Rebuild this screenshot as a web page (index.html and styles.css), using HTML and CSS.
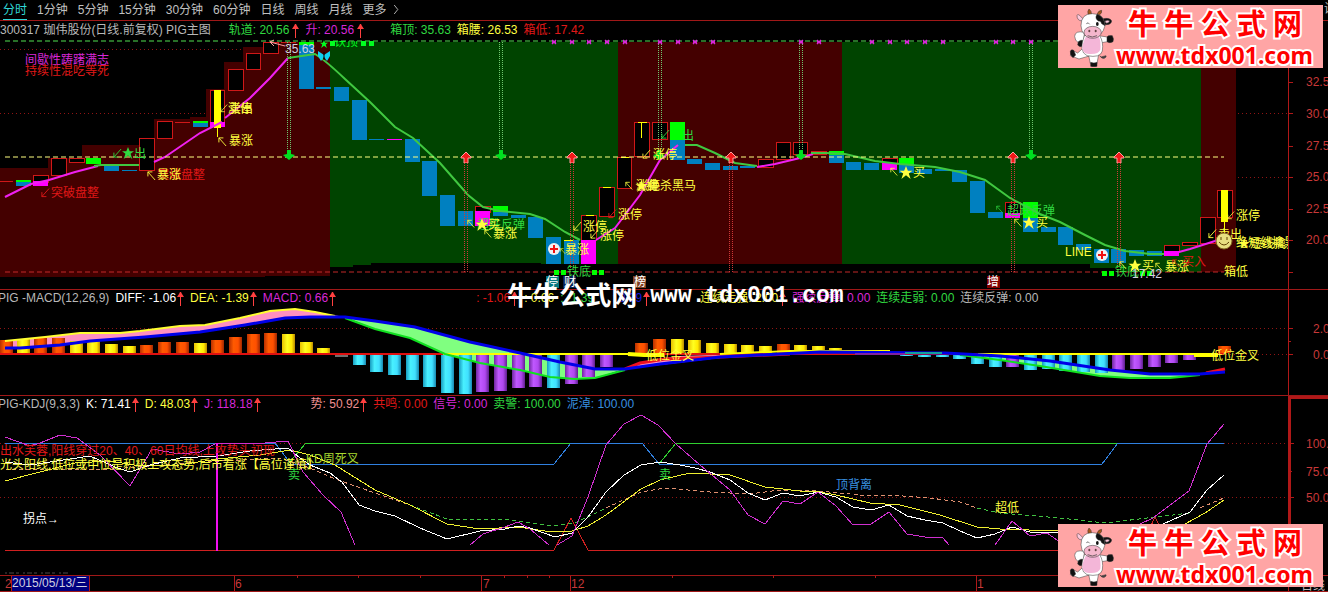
FILE: index.html
```
<!DOCTYPE html>
<html lang="zh-CN">
<head>
<meta charset="utf-8">
<title>珈伟股份 日线 PIG主图</title>
<link rel="stylesheet" href="styles.css">
</head>
<body>
<svg class="defs" aria-hidden="true">
  <defs>
    <linearGradient id="gOrange"><stop offset="0" stop-color="#b83000"/><stop offset=".35" stop-color="#ff5a00"/><stop offset=".7" stop-color="#ff5000"/><stop offset="1" stop-color="#a02800"/></linearGradient>
    <linearGradient id="gYellow"><stop offset="0" stop-color="#e8c000"/><stop offset=".4" stop-color="#ffff20"/><stop offset=".75" stop-color="#ffe800"/><stop offset="1" stop-color="#b88800"/></linearGradient>
    <linearGradient id="gCyan"><stop offset="0" stop-color="#189cc0"/><stop offset=".35" stop-color="#48f0ff"/><stop offset=".7" stop-color="#40e0ff"/><stop offset="1" stop-color="#1888b0"/></linearGradient>
    <linearGradient id="gPurple"><stop offset="0" stop-color="#7028a0"/><stop offset=".35" stop-color="#c058ff"/><stop offset=".7" stop-color="#b048f0"/><stop offset="1" stop-color="#602090"/></linearGradient>
    <symbol id="up" viewBox="0 0 7 14"><path d="M3 3h1v11H3zM3 0h1l1 2 2 3H0l2-3z" fill="#ff4040"/></symbol>
    <symbol id="sw" viewBox="0 0 10 10"><path d="M9 0L1 9M1 4v5h5" fill="none" stroke="currentColor"/></symbol>
    <symbol id="nw" viewBox="0 0 10 10"><path d="M9 10L1 1M1 6V1h5" fill="none" stroke="currentColor"/></symbol>
    <symbol id="star" viewBox="0 0 14 14"><path d="M7 0l2 5h5l-4 3 2 6-5-4-5 4 2-6-4-3h5z" fill="currentColor"/></symbol>
    <symbol id="buy" viewBox="0 0 12 12"><path d="M6 1l5 5v1H8v5H4V7H1V6z" fill="#f01818" stroke="#ffa0a0"/></symbol>
    <symbol id="sell" viewBox="0 0 12 10"><path d="M4 0h4v4l4 1-6 5-6-5 4-1z" fill="#00e020"/></symbol>
    <symbol id="x" viewBox="0 0 6 6"><path d="M1 1l4 4M5 1L1 5M1 3h4" stroke="#d828d8" stroke-width="1.4" fill="none"/></symbol>
    <symbol id="cross" viewBox="0 0 12 12"><circle cx="6" cy="6" r="6" fill="#f0f0f0"/><path d="M5 2h2v3h3v2H7v3H5V7H2V5h3z" fill="#f01010"/></symbol>
    <symbol id="cow" viewBox="0 0 135 180">
      <g stroke="#333" stroke-width="1.5" stroke-linejoin="round">
        <path d="M92 146q6 10 14 8q8-4 5-8l-12 3" fill="#444"/>
        <path d="M48 118L26 138 10 130 4 146 30 156Q50 150 64 146z" fill="#fff"/>
        <path d="M4 132q4-6 10-2l6 14-8 8q-10-8-8-20z" fill="#111"/>
        <path d="M58 140l6 30h20l6-34z" fill="#fff"/>
        <path d="M65 166q10 4 19 0v12q-10 3-19 0z" fill="#111"/>
        <path d="M46 76Q18 70 17 88q0 12 12 20l16-10z" fill="#fff"/>
        <path d="M28 104q8-8 16-2l-4 16q-8 4-14-4z" fill="#111"/>
        <path d="M88 86l28 4v14l-24 4z" fill="#fff"/>
        <path d="M114 90q2-5 16-4q5 8 2 18-10 6-18 0z" fill="#111"/>
        <path d="M46 86Q28 134 54 146q40 8 46-14Q104 104 92 86z" fill="#fff"/>
        <path d="M50 90Q28 134 54 140q34 4 40-12Q96 102 90 90z" fill="#f4b6d8" stroke="none"/>
        <path d="M58 24Q54 12 60 6q8 6 8 16zM90 24q10-4 8-14-10 0-14 12z" fill="#a85818"/>
        <path d="M42 36Q26 16 24 26q0 14 14 16z" fill="#ffc8dc"/>
        <path d="M100 36q22-6 28 6-2 14-24 10z" fill="#111"/>
        <path d="M108 42q8-4 14 0-2 8-12 6z" fill="#ffc8dc"/>
        <path d="M36 56q0-36 34-36 36 0 38 36-8 34-38 34-32 0-34-34z" fill="#fff"/>
        <path d="M84 22q22 6 24 34l-10-6q-2-10-10-8-12-8-4-20z" fill="#111"/>
        <ellipse cx="71" cy="76" rx="26" ry="18" fill="#f4b6cc"/>
      </g>
      <path d="M56 86q14 8 28 0M52 50q6-6 10 2" fill="none" stroke="#333" stroke-width="2"/>
      <ellipse cx="61" cy="72" rx="3" ry="4" fill="#644"/><ellipse cx="80" cy="72" rx="3" ry="4" fill="#644"/>
      <ellipse cx="85" cy="51" rx="4" ry="6" fill="#111"/>
    </symbol>
  </defs>
</svg>

<main class="terminal">
  <nav class="periods">
    <button class="period active">分时</button><button class="period">1分钟</button><button class="period">5分钟</button><button class="period">15分钟</button><button class="period">30分钟</button><button class="period">60分钟</button><button class="period">日线</button><button class="period">周线</button><button class="period">月线</button><button class="period">更多 <svg class="chev" viewBox="0 0 6 10"><path d="M1 0l4 5-4 5" fill="none" stroke="currentColor"/></svg></button>
    <span class="tools">设</span>
  </nav>

  <section class="panel">
    <header class="legend">
      <span class="grey">300317 珈伟股份(日线.前复权) PIG主图</span>
      <span class="green far">轨道: 20.56<svg class="arrow"><use href="#up"/></svg></span>
      <span class="magenta">升: 20.56<svg class="arrow"><use href="#up"/></svg></span>
      <span class="green wide">箱顶: 35.63</span>
      <span class="yellow">箱腰: 26.53</span>
      <span class="red">箱低: 17.42</span>
    </header>
    <svg class="chart" viewBox="0 21 1328 268">
      <g class="dots"><path d="M0 49H262M0 113H240M1238 113H1294M1238 177H1294"/></g>
      <path class="zone-red" d="M0 168H48V158H82V145H139V138H154V119H190V117H206V89H224V62H243V47H263V42H330V276H265V277H0zM618 42H842V264H618zM1201 42H1236V272H1201z"/>
      <path class="zone-green" d="M330 42H618V264H541V263H371V265H353V267H330zM842 42H1201V272H1120V268H1090V264H842z"/>
      <path d="M5 41H1224" stroke="#50e050" stroke-dasharray="5 3"/>
      <path d="M5 272H1224" stroke="#c02828" stroke-dasharray="5 3"/>

      <path class="hollow" d="M0 181h13M33 175h15v7h-15zM51 158h15v17h-15zM69 158h15v4h-15zM139 138h15v32h-15zM157 121h15v17h-15zM175 122h15M210 90h14v35h-14zM228 69h15v21h-15zM246 53h14v16h-14zM263 42h15v11h-15zM281 42h15M475 206h15v6h-15zM581 215h15v25h-15zM599 187h15v29h-15zM617 157h14v31h-14zM634 122h15v34h-15zM652 122h15v17h-15zM758 159h15v8h-15zM776 142h14v17h-14zM793 142h14v12h-14zM811 151h15v3h-15zM882 158h15v6h-15zM1005 202h15v11h-15zM1164 245h15v7h-15zM1182 242h15v3h-15zM1200 217h15v26h-15zM1217 190h15v27h-15z"/>
      <path class="blue-fill" d="M16 182h15v4h-15zM104 164h15v7h-15zM122 170h15v1h-15zM193 123h15v4h-15zM299 43h15v46h-15zM316 87h15v2h-15zM334 87h15v14h-15zM352 100h15v40h-15zM369 139h15v1h-15zM405 139h15v23h-15zM422 161h15v35h-15zM440 195h15v31h-15zM458 211h15v15h-15zM493 212h15v4h-15zM511 215h15v3h-15zM528 217h15v21h-15zM546 237h15v27h-15zM564 240h15v24h-15zM670 140h15v20h-15zM687 159h15v5h-15zM705 163h15v7h-15zM723 166h15v4h-15zM740 166h15v2h-15zM829 155h15v8h-15zM846 162h15v8h-15zM864 163h15v7h-15zM899 164h15v9h-15zM917 169h15v5h-15zM935 169h15v2h-15zM952 170h15v12h-15zM970 181h15v32h-15zM988 212h15v6h-15zM1023 218h15v14h-15zM1041 227h15v5h-15zM1058 227h15v18h-15zM1076 244h15v6h-15zM1094 249h15v14h-15zM1111 249h15v14h-15zM1129 250h15v6h-15zM1147 251h15v5h-15z"/>
      <path class="lime-fill" d="M16 180h15v2h-15zM86 158h15v6h-15zM193 121h15v2h-15zM299 42h15v3h-15zM493 206h15v6h-15zM670 122h15v18h-15zM829 151h15v4h-15zM899 158h15v6h-15zM1023 202h15v16h-15z"/>
      <path class="magenta-fill" d="M33 181h15v5h-15zM210 122h15v5h-15zM387 139h15v1h-15zM475 211h15v15h-15zM581 240h15v24h-15zM882 163h15v7h-15zM1005 213h15v5h-15zM1164 251h15v5h-15z"/>
      <path class="yellow-fill" d="M214 90h7v38h-7zM217 128h1v9h-1zM1221 190h7v32h-7zM1224 222h1v18h-1zM564 240h9v1h-9zM586 215h8v1h-8zM603 187h8v1h-8zM621 157h8v1h-8zM638 122h9v1h-9zM641 122h1v16h-1z"/>
      <g class="ma">
        <path class="m-up" d="M5 197L31 184 49 180 75 172 98 166M154 162L165 157 200 133 222 122M225 118L250 98 270 78 288 58M596 240L615 228 640 195 660 160 678 145M757 167L775 164 800 158 813 154M1179 252L1190 249 1215 241 1228 235"/>
        <path class="m-down" d="M94 166L101 165H139M288 58L315 54Q325 60 345 79L370 102 395 127 413 138 440 163 468 195 483 207 500 211 530 214 545 219 565 232 580 240M685 145H697L715 153 735 163 757 166M811 153L826 153 845 154 875 161 900 164 935 167 960 172 985 180 1010 198 1040 214 1060 222 1085 235 1105 245 1125 251 1150 254H1164"/>
      </g>
      <path d="M5 157H1224" stroke="#ffff80" stroke-dasharray="5 3"/>
      <g class="rain-green"><path d="M287 42V150M290 42V150M499 42V150M502 42V150M658 42V150M661 42V150M799 42V150M802 42V150M1029 42V150M1032 42V150"/></g>
      <g class="rain-red"><path d="M464 163V272M467 163V272M570 163V272M573 163V272M729 163V272M732 163V272M1011 163V272M1014 163V272M1117 163V272M1120 163V272"/></g>
      <g>
        <use href="#sell" x="283" y="150" width="12" height="10"/><use href="#sell" x="495" y="150" width="12" height="10"/><use href="#sell" x="653" y="150" width="12" height="10"/><use href="#sell" x="795" y="150" width="12" height="10"/><use href="#sell" x="1025" y="150" width="12" height="10"/>
        <use href="#buy" x="460" y="151" width="12" height="12"/><use href="#buy" x="566" y="151" width="12" height="12"/><use href="#buy" x="725" y="151" width="12" height="12"/><use href="#buy" x="1007" y="151" width="12" height="12"/><use href="#buy" x="1113" y="151" width="12" height="12"/>
      </g>
      <g>
        <use href="#x" x="551" y="39" width="6" height="6"/><use href="#x" x="569" y="39" width="6" height="6"/><use href="#x" x="586" y="39" width="6" height="6"/><use href="#x" x="604" y="39" width="6" height="6"/><use href="#x" x="622" y="39" width="6" height="6"/><use href="#x" x="657" y="39" width="6" height="6"/><use href="#x" x="675" y="39" width="6" height="6"/><use href="#x" x="692" y="39" width="6" height="6"/><use href="#x" x="710" y="39" width="6" height="6"/><use href="#x" x="798" y="39" width="6" height="6"/><use href="#x" x="816" y="39" width="6" height="6"/><use href="#x" x="869" y="39" width="6" height="6"/><use href="#x" x="887" y="39" width="6" height="6"/><use href="#x" x="904" y="39" width="6" height="6"/><use href="#x" x="922" y="39" width="6" height="6"/><use href="#x" x="940" y="39" width="6" height="6"/><use href="#x" x="993" y="39" width="6" height="6"/><use href="#x" x="1010" y="39" width="6" height="6"/><use href="#x" x="1028" y="39" width="6" height="6"/>
      </g>

      <text class="magenta" x="25" y="64">间歇性踌躇满志</text>
      <text class="red" x="25" y="75">持续性混吃等死</text>
      <g class="green"><use href="#sw" x="113" y="149" width="9" height="9"/><use href="#star" x="122" y="147" width="12" height="12"/><text x="134" y="158">出</text></g>
      <g class="red"><use href="#sw" x="41" y="188" width="9" height="10"/><text x="51" y="197">突破盘整</text><text x="157" y="179">突破盘整</text></g>
      <g class="yellow"><use href="#nw" x="147" y="171" width="9" height="9"/><text x="157" y="179">暴涨</text>
        <use href="#sw" x="220" y="104" width="8" height="9"/><text x="228" y="113">涨停</text><text x="229" y="113">卖出</text>
        <use href="#nw" x="218" y="137" width="9" height="9"/><text x="229" y="145">暴涨</text></g>
      <path d="M285 46L270 42l4-2M270 42l4 4" fill="none" stroke="#ffa0a0"/>
      <text class="pale" x="285" y="53">35.63</text>
      <g class="lime"><use href="#star" x="318" y="40" width="12" height="8"/><path d="M361 41h5v5h-5zM369 41h5v5h-5zM330 41h5v5h-5z" fill="currentColor"/><svg x="334" y="41" width="26" height="6" viewBox="334 41 26 6"><text x="334" y="46">铁顶</text></svg></g>
      <path d="M324 55l-6-4v5l3 5 3-4 3 4 3-5v-5z" fill="#10d0f0"/><path d="M324 52v8" stroke="#000"/>

      <g class="green"><text x="477" y="229">超跌反弹</text></g>
      <g class="yellow"><use href="#nw" x="467" y="219" width="8" height="9"/><use href="#star" x="475" y="218" width="14" height="13"/><text x="488" y="229">买</text><use href="#nw" x="484" y="229" width="8" height="9"/><text x="493" y="238">暴涨</text>
        <use href="#nw" x="560" y="248" width="6" height="6"/><text x="565" y="254">暴涨</text>
        <use href="#sw" x="573" y="222" width="9" height="9"/><text x="583" y="231">涨停</text><use href="#sw" x="590" y="230" width="9" height="9"/><text x="600" y="240">涨停</text>
        <text x="618" y="219">涨停</text><use href="#nw" x="625" y="181" width="8" height="9"/><text x="636" y="190">涨停</text><use href="#star" x="635" y="180" width="13" height="12"/><text x="648" y="190">绝杀黑马</text><text x="646" y="190">擒</text>
        <use href="#sw" x="642" y="150" width="9" height="9"/><text x="653" y="159">涨停</text></g>
      <g class="red"><use href="#sw" x="608" y="209" width="9" height="10"/></g>
      <g class="green"><use href="#sw" x="661" y="130" width="9" height="9"/><text x="682" y="140">出</text></g>
      <use href="#cross" x="548" y="243" width="12" height="12"/>
      <g class="green"><text x="567" y="276">铁底</text><text x="1115" y="276">铁底</text></g>
      <path class="lime-fill" d="M554 270h5v5h-5zM561 270h5v5h-5zM592 270h5v5h-5zM599 270h5v5h-5zM1102 271h5v5h-5zM1109 271h5v5h-5zM1140 271h5v5h-5zM1147 271h5v5h-5z"/>
      <path d="M546 276h13v12h-13z" fill="#087880"/><path d="M563 276h13v12h-13z" fill="#082050"/><path d="M633 276h13v12h-13z" fill="#804020"/><path d="M987 276h13v12h-13z" fill="#800000"/>
      <g class="white"><text x="546" y="286">停</text><text x="564" y="286">财</text><text x="634" y="286">榜</text><text x="987" y="286">增</text></g>

      <g class="yellow"><use href="#nw" x="890" y="167" width="8" height="9"/><use href="#star" x="899" y="166" width="14" height="13"/><text x="913" y="177">买</text></g>
      <g class="green"><use href="#nw" x="996" y="205" width="7" height="8"/><text x="1007" y="215">超跌反弹</text></g>
      <g class="yellow"><use href="#nw" x="1014" y="218" width="8" height="9"/><use href="#star" x="1022" y="216" width="14" height="13"/><text x="1036" y="227">买</text>
        <text x="1065" y="256">LINE</text>
        <use href="#nw" x="1119" y="261" width="8" height="8"/><use href="#star" x="1128" y="259" width="14" height="13"/><text x="1142" y="270">买</text><use href="#nw" x="1155" y="262" width="8" height="9"/><text x="1165" y="271">暴涨</text></g>
      <text class="pale" x="1132" y="278">17.42</text>
      <use href="#cross" x="1096" y="249" width="12" height="12"/>
      <g class="red"><use href="#nw" x="1172" y="259" width="8" height="8"/><text x="1182" y="266">买入</text></g>
      <g class="yellow"><use href="#sw" x="1208" y="229" width="9" height="10"/><text x="1218" y="239">卖出</text><use href="#sw" x="1227" y="211" width="8" height="9"/><text x="1236" y="220">涨停</text><text x="1224" y="276">箱低</text></g>
      <svg x="1232" y="230" width="56" height="24" viewBox="1232 230 56 24"><g class="yellow"><text x="1236" y="247">绝短线擒黑马</text><text x="1238" y="248">★短线擒黑</text></g></svg>
      <circle cx="1224" cy="241" r="8" fill="#e8e080" stroke="#806820"/><path d="M1221 237v3M1227 237v3M1219 242q5 6 10 0" fill="none" stroke="#604000"/>

      <path class="axis" d="M1288 21V289M1288 82h5M1288 113h5M1288 146h5M1288 177h5M1288 209h5M1288 240h5M1288 272h5"/>
      <g class="scale"><text x="1306" y="86">32.50</text><text x="1306" y="118">30.00</text><text x="1306" y="150">27.50</text><text x="1306" y="181">25.00</text><text x="1306" y="213">22.50</text><text x="1306" y="244">20.00</text></g>
    </svg>
  </section>

  <section class="panel indicator">
    <header class="legend">
      <span class="grey">PIG -MACD(12,26,9)</span>
      <span class="white">DIFF: -1.06<svg class="arrow"><use href="#up"/></svg></span>
      <span class="yellow">DEA: -1.39<svg class="arrow"><use href="#up"/></svg></span>
      <span class="magenta">MACD: 0.66<svg class="arrow"><use href="#up"/></svg></span>
      <span class="red apart">: -1.06<svg class="arrow"><use href="#up"/></svg></span>
      <span class="yellow">: 0.66</span>
      <span class="green">: -1.39</span>
      <span class="blue far">: 0.39<svg class="arrow"><use href="#up"/></svg></span>
      <span class="yellow broad">连续走强: 2.00<svg class="arrow"><use href="#up"/></svg></span>
      <span class="magenta">强续反弹: 0.00</span>
      <span class="green">连续走弱: 0.00</span>
      <span class="grey">连续反弹: 0.00</span>
    </header>
    <svg class="chart" viewBox="0 290 1328 105">
      <g class="dots"><path d="M0 328H1294M1226 354H1294"/></g>
      <path d="M5 341L45 337 80 333 120 333 140 331 180 326 205 325 240 318 270 311 295 309 315 312 345 317 310 317 285 318 245 325 200 332 145 337 90 341 60 345 20 348 5 348z" fill="#ff90c0"/>
      <path d="M345 317L375 321 415 327 470 342 520 353 560 362 595 369 625 369 595 378 575 379 550 377 520 370 480 363 445 354 410 338 375 329z" fill="#80ff80"/>
      <path d="M625 369L650 360 680 356 780 353 820 352 780 355 720 358 660 365z" fill="#ff90c0"/>
      <path d="M960 354L1000 356 1050 361 1110 370 1150 374 1200 374 1170 378 1130 378 1100 376 1040 366z" fill="#80ff80"/>
      <path d="M0 354H1224" stroke="#e01010" stroke-width="2"/>
      <g fill="url(#gOrange)"><rect x="0" y="340" width="13" height="13"/><rect x="34" y="338" width="13" height="15"/><rect x="52" y="338" width="13" height="15"/><rect x="140" y="345" width="13" height="8"/><rect x="158" y="342" width="13" height="11"/><rect x="176" y="342" width="13" height="11"/><rect x="211" y="340" width="13" height="13"/><rect x="229" y="337" width="13" height="16"/><rect x="247" y="334" width="13" height="19"/><rect x="264" y="333" width="13" height="20"/><rect x="635" y="343" width="13" height="10"/><rect x="653" y="339" width="13" height="14"/><rect x="777" y="344" width="13" height="9"/><rect x="1218" y="346" width="13" height="7"/></g>
      <g fill="url(#gYellow)"><rect x="17" y="339" width="13" height="14"/><rect x="70" y="341" width="13" height="12"/><rect x="87" y="341" width="13" height="12"/><rect x="105" y="344" width="13" height="9"/><rect x="123" y="346" width="13" height="7"/><rect x="194" y="343" width="13" height="10"/><rect x="282" y="334" width="13" height="19"/><rect x="300" y="342" width="13" height="11"/><rect x="317" y="348" width="13" height="5"/><rect x="671" y="339" width="13" height="14"/><rect x="688" y="340" width="13" height="13"/><rect x="706" y="343" width="13" height="10"/><rect x="724" y="344" width="13" height="9"/><rect x="741" y="345" width="13" height="8"/><rect x="759" y="346" width="13" height="7"/><rect x="794" y="345" width="13" height="8"/><rect x="812" y="346" width="13" height="6"/><rect x="829" y="348" width="13" height="4"/></g>
      <g fill="url(#gCyan)"><rect x="353" y="355" width="13" height="10"/><rect x="370" y="355" width="13" height="17"/><rect x="388" y="355" width="13" height="20"/><rect x="406" y="355" width="13" height="25"/><rect x="423" y="355" width="13" height="32"/><rect x="441" y="355" width="13" height="38"/><rect x="459" y="355" width="13" height="39"/><rect x="547" y="355" width="13" height="33"/><rect x="900" y="355" width="13" height="1"/><rect x="918" y="355" width="13" height="2"/><rect x="936" y="355" width="13" height="2"/><rect x="953" y="355" width="13" height="4"/><rect x="971" y="355" width="13" height="9"/><rect x="989" y="355" width="13" height="12"/><rect x="1024" y="355" width="13" height="15"/><rect x="1042" y="355" width="13" height="14"/><rect x="1059" y="355" width="13" height="16"/><rect x="1077" y="355" width="13" height="17"/><rect x="1095" y="355" width="13" height="18"/></g>
      <g fill="url(#gPurple)"><rect x="476" y="355" width="13" height="37"/><rect x="494" y="355" width="13" height="36"/><rect x="512" y="355" width="13" height="33"/><rect x="529" y="355" width="13" height="32"/><rect x="565" y="355" width="13" height="29"/><rect x="582" y="355" width="13" height="22"/><rect x="600" y="355" width="13" height="12"/><rect x="1006" y="355" width="13" height="12"/><rect x="1112" y="355" width="13" height="15"/><rect x="1130" y="355" width="13" height="14"/><rect x="1148" y="355" width="13" height="12"/><rect x="1165" y="355" width="13" height="8"/><rect x="1183" y="355" width="13" height="5"/></g>
      <path d="M335 356h13" stroke="#e0e0e0"/>
      <g fill="none" stroke-width="2">
        <path d="M443 354H628M978 354H1195M720 354L790 351 850 351 890 351" stroke="#ffff00"/>
        <path d="M628 354L644 355H664M1194 355H1218" stroke="#ffff00" stroke-width="4"/>
        <path d="M5 341L45 337 80 333 120 333 140 331 180 326 205 325 240 318 270 311 295 309 315 312 335 316" stroke="#ffff30"/>
        <path d="M345 318L375 329 410 338 445 354 480 363 520 370 550 377 575 379 595 378 625 370M960 355L1000 360 1040 366 1100 376 1130 378 1170 378 1200 375" stroke="#10e020"/>
        <path d="M625 369L640 363 665 359 720 357 790 354M1206 373L1225 369" stroke="#f01020" stroke-width="3"/>
        <path d="M5 348H20L60 345 90 341 145 337 200 332 245 325 285 318 310 317H345L375 321 415 327 470 342 520 353 560 362 595 369 625 369 660 364 720 357 780 354 820 352 945 353 1000 356 1050 361 1110 370 1150 374 1200 374 1225 372" stroke="#0000e8" stroke-width="3"/>
        <path d="M855 354H905" stroke="#8020a0"/><path d="M905 353H942" stroke="#10a0a0"/>
      </g>
      <g class="yellow"><text x="646" y="360">低位金叉</text><text x="1211" y="360">低位金叉</text></g>
      <path class="axis" d="M1288 290V395M1288 328h5M1288 341h3M1288 354h5"/>
      <g class="scale"><text x="1313" y="333">2.00</text><text x="1313" y="359">0.00</text></g>
    </svg>
  </section>

  <section class="panel indicator">
    <header class="legend">
      <span class="grey">PIG-KDJ(9,3,3)</span>
      <span class="white">K: 71.41<svg class="arrow"><use href="#up"/></svg></span>
      <span class="yellow">D: 48.03<svg class="arrow"><use href="#up"/></svg></span>
      <span class="magenta">J: 118.18<svg class="arrow"><use href="#up"/></svg></span>
      <span class="salmon broad">势: 50.92<svg class="arrow"><use href="#up"/></svg></span>
      <span class="red">共鸣: 0.00</span>
      <span class="magenta">信号: 0.00</span>
      <span class="green">卖警: 100.00</span>
      <span class="sky">泥淖: 100.00</span>
    </header>
    <svg class="chart" viewBox="0 396 1328 179">
      <g class="dots"><path d="M0 443H1294M0 497H1294"/></g>
      <g class="lines">
        <path d="M5 550H554L571 518 588 550H1140L1155 517 1172 550H1224" stroke="#d02020"/>
        <path d="M288 464L306 443H642L659 464 676 443H1118" stroke="#30d030"/>
        <path d="M5 443H275L291 464H554L571 443H642L659 464H1102L1118 443H1224" stroke="#3080e0"/>
        <path d="M306 443H560M676 443H1112" stroke="#30d030"/>
        <path d="M5 469L100 470 200 462 280 458 310 468 335 479 375 493 410 505M606 508L641 492 665 488 710 492 750 494 780 490 818 491 860 495 890 495 930 498 960 502 977 508M1200 508L1224 498" stroke="#e09070" stroke-dasharray="4 3"/>
        <path d="M410 505L447 519 510 520 553 526 575 523 606 508M977 508L1000 513 1060 518 1105 523 1190 513" stroke="#40c040" stroke-dasharray="4 3"/>
        <path d="M5 481L40 472 75 463 110 461 140 466 180 465 217 459 260 455 290 450 310 455 335 465 375 490 410 505 447 524 480 529 518 527 545 531 572 531 588 526 606 515 641 489 660 480 690 473 730 475 765 487 800 491 820 492 836 495 870 503 900 505 940 515 977 527 1000 529 1058 531 1185 524 1205 513 1224 500" stroke="#f0f030"/>
        <path d="M5 462L30 465 50 462 90 456 115 467 130 472 150 465 180 458 217 456 250 451 275 449 288 448 300 458 310 465 330 473 342 482 359 505 375 511 395 516 420 528 447 539 480 531 505 529 518 526 530 528 555 537 572 533 588 517 606 492 624 475 641 465 660 462 680 465 695 468 710 472 730 480 748 493 765 500 783 493 800 496 818 492 836 497 853 507 871 510 889 505 907 516 925 520 943 523 960 531 977 538 995 534 1012 527 1030 532 1058 533M1163 524L1190 512 1207 490 1224 475" stroke="#fff"/>
        <path d="M5 437L30 446 40 443 60 435 77 438 100 455 130 486 152 449 180 454 200 452 217 443 265 443 288 441 303 472 323 495 341 512 355 545M470 545L483 534 505 527 518 522 530 529 549 545M557 545L572 536 588 497 606 445 624 424 641 415 658 425 676 444 700 465 730 490 748 515 765 524 783 501 800 504 818 492 836 506 853 525 871 524 889 512 907 534 925 537 943 538 949 545M995 545L1012 521 1030 536 1047 533 1060 542M1140 524L1153 518 1189 491 1207 444 1224 424" stroke="#d030d0"/>
      </g>
      <path d="M216 443h2v108h-2z" fill="#f010f0"/>
      <path d="M5 573H70" stroke="#504848" stroke-dasharray="2 2 5 2 3 4"/>
      <text class="red" x="0" y="455">出水芙蓉,阳线穿过20、40、60日均线,上攻势头初现</text>
      <text class="yellow" x="0" y="469">光头阳线,低位或中位是积极上攻态势,后市看涨【高位谨慎】</text>
      <text class="olive" x="306" y="463">KD周死叉</text>
      <text class="green" x="288" y="479">卖</text><text class="green" x="659" y="479">卖</text>
      <text class="sky" x="836" y="489">顶背离</text>
      <text class="yellow" x="995" y="512">超低</text>
      <text class="white" x="23" y="523">拐点→</text>
      <path class="axis thick" d="M1328 397H1289V575"/><path class="axis" d="M1288 443h6M1288 471h4M1288 497h6"/>
      <g class="scale"><text x="1306" y="448">100.00</text><text x="1306" y="476">75.00</text><text x="1306" y="502">50.00</text></g>
    </svg>
  </section>

  <section class="panel">
    <svg class="chart" viewBox="0 576 1328 15">
      <path d="M11 576h78v15h-78z" fill="#000080"/>
      <path class="axis" d="M11 576v15M89 576v15M234 576v15M481 576v15M570 576v15M976 576v15M297 576v2M358 576v2M420 576v2M504 576v2M527 576v2M549 576v2M672 576v2M773 576v2M875 576v2M1288 576v15"/>
      <g class="scale"><text x="5" y="588">2</text><text x="235" y="588">6</text><text x="483" y="588">7</text><text x="571" y="588">12</text><text x="977" y="588">1</text></g>
      <text class="pale" x="12" y="587">2015/05/13/三</text>
      <text class="grey" x="1301" y="590">日线</text>
    </svg>
  </section>

  <div class="watermark"><span>牛牛公式网</span><span class="mono">www.tdx001.com</span></div>
  <aside class="banner top"><svg class="cow"><use href="#cow"/></svg><div class="brand"><div class="name"><span>牛</span><span>牛</span><span>公</span><span>式</span><span>网</span></div><div class="url">www.tdx001.com</div></div></aside>
  <aside class="banner bottom"><svg class="cow"><use href="#cow"/></svg><div class="brand"><div class="name"><span>牛</span><span>牛</span><span>公</span><span>式</span><span>网</span></div><div class="url">www.tdx001.com</div></div></aside>
</main>
</body>
</html>
```

FILE: styles.css
```
* { box-sizing: border-box; }
body {
  margin: 0;
  background: #000;
  color: #c0c0c0;
  font: 12px/18px "Liberation Sans", "Noto Sans CJK SC", sans-serif;
  overflow-x: hidden;
}
.defs { position: absolute; width: 0; height: 0; }
.terminal { position: relative; overflow: hidden; }

.periods {
  display: flex;
  gap: 10px;
  padding-left: 3px;
  border-bottom: 1px solid #a01818;
  white-space: nowrap;
}
.period {
  height: 20px;
  padding: 0;
  border: 0;
  background: none;
  color: inherit;
  font: inherit;
}
.period.active { color: #30d8d8; border-bottom: 1px solid #30d8d8; }
.chev { width: 6px; height: 9px; margin-left: 3px; }
.tools { margin-left: auto; width: 4px; overflow: hidden; }

.panel {
  display: grid;
  border-bottom: 1px solid #a01818;
}
.panel > * { grid-area: 1 / 1; min-width: 0; }
.chart { display: block; width: 100%; height: auto; }
.legend {
  display: flex;
  align-self: start;
  gap: 6px;
  white-space: nowrap;
  z-index: 1;
}
.arrow { width: 7px; height: 14px; margin-left: 3px; vertical-align: middle; }
.indicator .legend { line-height: 16px; margin-left: -2px; }
.indicator .arrow { margin-left: 1px; }
.far { margin-left: 12px; }
.wide { margin-left: 20px; }
.broad { margin-left: 44px; }
.apart { margin-left: 134px; }

.grey { color: #b8b8b8; fill: #b8b8b8; }
.pale { color: #d0d0e0; fill: #d0d0e0; }
.white { color: #fff; fill: #fff; }
.green { color: #30d840; fill: #30d840; }
.lime { color: #00ff20; fill: #00ff20; }
.magenta { color: #d828d8; fill: #d828d8; }
.yellow { color: #ffff40; fill: #ffff40; }
.red { color: #e01818; fill: #e01818; }
.blue { color: #1818d8; fill: #1818d8; }
.sky { color: #3890e0; fill: #3890e0; }
.salmon { color: #f09090; fill: #f09090; }
.olive { fill: #a8d830; }

.zone-red { fill: #440000; }
.zone-green { fill: #004400; }
.hollow { fill: #000; stroke: #d01818; }
.blue-fill { fill: #0080c0; }
.lime-fill { fill: #00ff00; }
.magenta-fill { fill: #ff00ff; }
.yellow-fill { fill: #ffff00; }
.hollow, .blue-fill, .lime-fill, .magenta-fill, .yellow-fill,
.axis, .dots, .rain-green, .rain-red, .zone-red, .zone-green, .lines { shape-rendering: crispEdges; }
.ma { fill: none; stroke-width: 2; }
.m-up { stroke: #f020f0; }
.m-down { stroke: #40c840; }
.dots { stroke: #901414; stroke-dasharray: 1 3; }
.rain-green { stroke: #70c870; stroke-dasharray: 1 1; }
.rain-red { stroke: #d03838; stroke-dasharray: 1 1; }
.lines { fill: none; }
.axis { fill: none; stroke: #b01818; }
.thick { stroke-width: 3; }
.scale { fill: #c83838; }

.watermark {
  position: absolute;
  left: 38.2%;
  top: 281px;
  z-index: 2;
  display: flex;
  gap: 13px;
  color: #fff;
  font-size: 26px;
  font-weight: 700;
  line-height: 30px;
}
.mono { font-family: "Liberation Mono", monospace; font-size: 23px; }

.banner {
  position: absolute;
  right: 5px;
  z-index: 3;
  display: flex;
  width: 265px;
  height: 63px;
  padding: 2px 12px 1px 11px;
  background: #ffa5a5;
  color: #ff0000;
  font-weight: 700;
}
.top { top: 5px; }
.bottom { bottom: 5px; }
.cow { width: 45px; height: 60px; flex: none; }
.brand {
  flex: 1;
  -webkit-text-stroke: 4px #fff;
  paint-order: stroke fill;
}
.name {
  display: flex;
  justify-content: space-between;
  padding: 0 11px 0 14px;
  font-size: 29px;
  line-height: 36px;
}
.url {
  padding-left: 2px;
  font-family: "Noto Sans", sans-serif;
  font-size: 23px;
  line-height: 24px;
}
```
